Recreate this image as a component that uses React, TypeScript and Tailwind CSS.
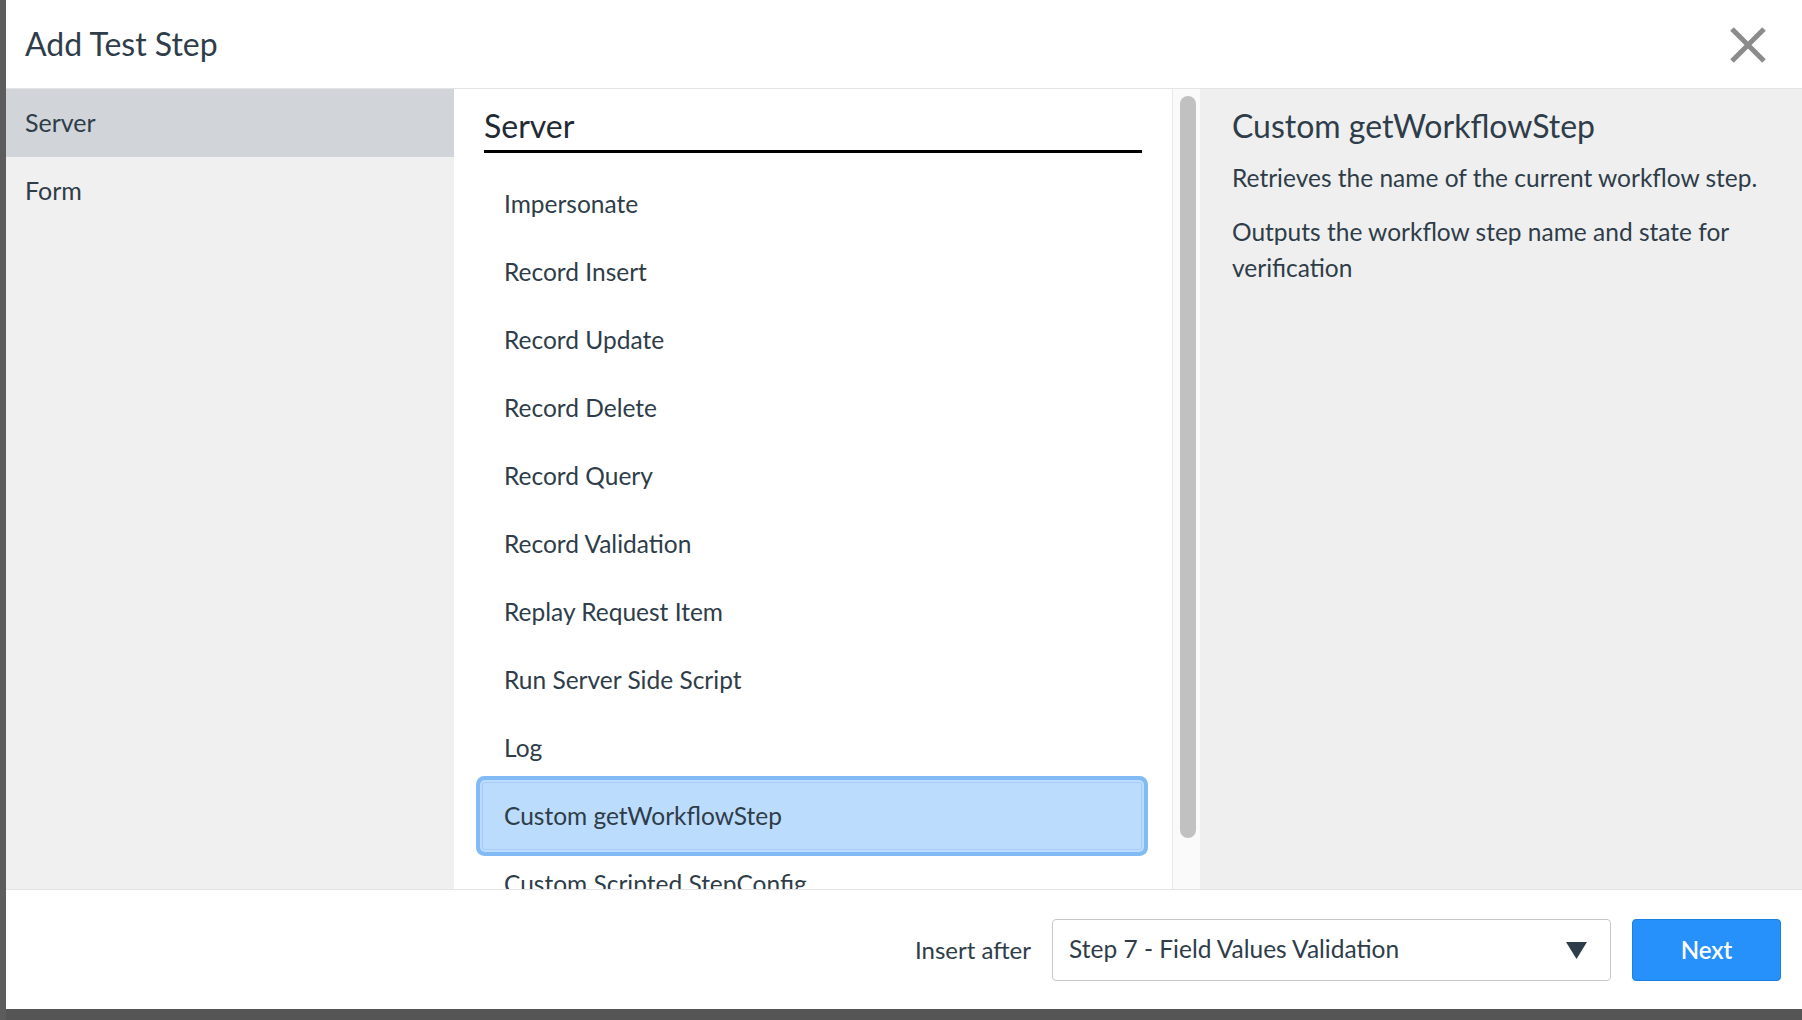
export default function App() {
  const steps = [
    'Impersonate',
    'Record Insert',
    'Record Update',
    'Record Delete',
    'Record Query',
    'Record Validation',
    'Replay Request Item',
    'Run Server Side Script',
    'Log',
    'Custom getWorkflowStep',
    'Custom Scripted StepConfig',
  ]
  const selected = 'Custom getWorkflowStep'

  return (
    <div className="flex h-[1020px] w-[1802px] bg-[#555555] font-['Lato',sans-serif] text-[#2e3d49]">
      {/* backdrop strip */}
      <div className="w-[6px] bg-[#5c5c5c]" />

      <div className="flex h-[1009px] flex-1 flex-col bg-white">
        {/* ── HEADER ── */}
        <header className="flex h-[89px] items-center justify-between border-b border-[#e4e4e4] pl-[19px] pr-[36px]">
          <h1 className="text-[32px] leading-none">Add Test Step</h1>
          <svg width="36" height="36" viewBox="0 0 36 36" className="mt-[2px]">
            <path d="M2 2 L34 34 M34 2 L2 34" stroke="#8b8b8b" strokeWidth="5" />
          </svg>
        </header>

        {/* ── BODY ── */}
        <div className="flex min-h-0 flex-1">
          {/* categories */}
          <nav className="w-[448px] bg-[#f0f0f0]">
            {['Server', 'Form'].map((c) => (
              <div
                key={c}
                className={`flex h-[68px] items-center pl-[19px] text-[25px] ${c === 'Server' ? 'bg-[#d1d5d9]' : ''}`}
              >
                {c}
              </div>
            ))}
          </nav>

          {/* steps list */}
          <div className="w-[718px] overflow-hidden">
            <div className="px-[30px] pt-[17px]">
              <h2 className="h-[47px] border-b-[3px] border-black text-[32px] leading-[40px] text-[#1f2a33]">Server</h2>
            </div>
            <ul className="mt-[17px] pl-[28px] pr-[30px]">
              {steps.map((s) => (
                <li
                  key={s}
                  className={`flex h-[68px] items-center pl-[22px] text-[24.5px] ${
                    s === selected
                      ? 'rounded-[3px] bg-[#bcdcfd] shadow-[inset_0_0_0_1px_#a6cdf8,0_0_0_2px_#bcdcfd,0_0_0_6px_#82baf6]'
                      : ''
                  }`}
                >
                  {s}
                </li>
              ))}
            </ul>
          </div>

          {/* scrollbar */}
          <div className="w-[28px] border-l border-[#e8e8e8] bg-[#fafafa] pl-[7px] pt-[7px]">
            <div className="h-[742px] w-[16px] rounded-full bg-[#c1c1c1]" />
          </div>

          {/* description */}
          <div className="flex-1 bg-[#efefef] pl-[32px] pt-[17px]">
            <h3 className="h-[40px] text-[32px] leading-[40px]">Custom getWorkflowStep</h3>
            <p className="mt-[14px] text-[24.5px] leading-[36px]">Retrieves the name of the current workflow step.</p>
            <p className="mt-[18px] max-w-[540px] text-[24.5px] leading-[36px]">
              Outputs the workflow step name and state for verification
            </p>
          </div>
        </div>

        {/* ── FOOTER ── */}
        <footer className="flex h-[120px] items-center justify-end gap-[21px] border-t border-[#e4e4e4] pr-[21px]">
          <span className="text-[24px]">Insert after</span>
          <div className="flex h-[62px] w-[559px] items-center justify-between rounded-[4px] border border-[#c8c8c8] pl-[16px] pr-[23px]">
            <span className="text-[24.5px]">Step 7 - Field Values Validation</span>
            <svg width="21" height="18" viewBox="0 0 21 18">
              <path d="M0 1 H21 L10.5 18 Z" fill="#2e3d49" />
            </svg>
          </div>
          <button className="h-[62px] w-[149px] rounded-[4px] border border-[#1b7fe3] bg-[#2690fb] text-[24px] font-semibold text-white">
            Next
          </button>
        </footer>
      </div>
    </div>
  )
}
